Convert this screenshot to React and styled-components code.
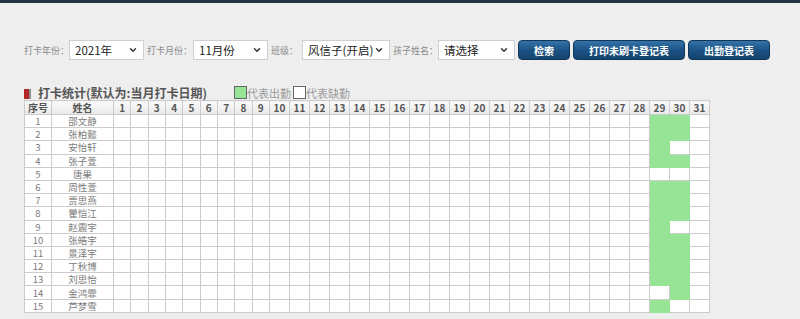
import styled, { createGlobalStyle } from "styled-components";
import { ChevronDown } from "lucide-react";

const GlobalStyle = createGlobalStyle`
  html, body {
    margin: 0;
    padding: 0;
    background: #eeeeee;
    font-family: "Noto Sans CJK SC", "Noto Sans", sans-serif;
  }
`;

const TopBar = styled.div`
  height: 3px;
  background: #25323f;
`;

const Page = styled.div`
  padding: 37px 0 0 24px;
`;

const FilterRow = styled.div`
  display: flex;
  align-items: center;
  height: 20px;
`;

const Label = styled.span`
  font-size: 9px;
  color: #8a8a8a;
  white-space: nowrap;
  width: ${(p) => p.w}px;
  margin-right: 3px;
`;

const SelectBox = styled.div`
  box-sizing: border-box;
  width: ${(p) => p.w}px;
  height: 20px;
  background: #fff;
  border: 1px solid #cfcfcf;
  display: flex;
  align-items: center;
  justify-content: space-between;
  padding: 0 5px 0 5px;
  margin-right: 3px;
  font-size: 11.5px;
  color: #222;
  white-space: nowrap;
  overflow: hidden;
`;

const Button = styled.button`
  box-sizing: border-box;
  width: ${(p) => p.w}px;
  height: 20px;
  margin-right: 3px;
  border: 1px solid #0f3558;
  border-radius: 4px;
  background: linear-gradient(#3472a8, #1a5182 55%, #15446f);
  color: #fff;
  font-family: inherit;
  font-weight: bold;
  font-size: 10px;
  padding: 0;
`;

const TitleRow = styled.div`
  display: flex;
  align-items: flex-end;
  margin-top: 25px;
  height: 15px;
`;

const TitleMark = styled.span`
  display: inline-block;
  width: 5px;
  height: 10px;
  background: #b3262a;
  border-right: 2px solid #8c8c8c;
  margin: 0 7px 1px 0;
`;

const Title = styled.span`
  font-size: 12px;
  font-weight: bold;
  color: #555;
  line-height: 15px;
  margin-right: 27px;
`;

const LegendBox = styled.span`
  display: inline-block;
  box-sizing: border-box;
  width: 13px;
  height: 13px;
  border: 1px solid #666;
  background: ${(p) => (p.on ? "#97e497" : "#fff")};
  margin-bottom: 1px;
`;

const LegendText = styled.span`
  font-size: 11px;
  color: #9a9a9a;
  line-height: 14px;
  margin-right: 2px;
`;

const Table = styled.table`
  border-collapse: collapse;
  table-layout: fixed;
  width: 685px;
  background: #fff;
`;

const HeadCell = styled.th`
  height: 13px;
  padding: 0;
  border: 1px solid #cccccc;
  background: linear-gradient(#fafafa, #e9e9e9);
  font-size: 10px;
  font-weight: bold;
  color: #555;
  line-height: 13px;
  text-align: center;
`;

const Cell = styled.td`
  height: 12.2px;
  padding: 0;
  border: 1px solid ${(p) => (p.on ? "#97e497" : "#cccccc")};
  background: ${(p) => (p.on ? "#97e497" : "#fff")};
  font-size: 9.5px;
  color: #7a7a7a;
  line-height: 12px;
  text-align: center;
`;

const names = [
  "邵文静", "张柏懿", "安怡轩", "张子萱", "唐果", "周性萱", "贾思燕", "瞿恺江",
  "赵震宇", "张皓宇", "景泽宇", "丁秋博", "刘思怡", "金鸿霏", "芦梦雪",
];

// attendance on day 29 / 30
const att = [
  [1, 1], [1, 1], [1, 0], [1, 1], [0, 0], [1, 1], [1, 1], [1, 1],
  [1, 0], [1, 1], [1, 1], [1, 1], [1, 1], [0, 1], [1, 0],
];

const days = Array.from({ length: 31 }, (_, i) => i + 1);

function Select({ w, value }) {
  return (
    <SelectBox w={w}>
      <span>{value}</span>
      <ChevronDown size={10} strokeWidth={3.5} color="#333" />
    </SelectBox>
  );
}

export default function App() {
  return (
    <>
      <GlobalStyle />
      <TopBar />
      <Page>
        <FilterRow>
          <Label w={42}>打卡年份：</Label>
          <Select w={75} value="2021年" />
          <Label w={43}>打卡月份：</Label>
          <Select w={75} value="11月份" />
          <Label w={28}>班级：</Label>
          <Select w={88} value="风信子(开启)" />
          <Label w={42}>孩子姓名：</Label>
          <Select w={77} value="请选择" />
          <Button w={52}>检索</Button>
          <Button w={112}>打印未刷卡登记表</Button>
          <Button w={82}>出勤登记表</Button>
        </FilterRow>

        <TitleRow>
          <TitleMark />
          <Title>打卡统计(默认为:当月打卡日期)</Title>
          <LegendBox on />
          <LegendText>代表出勤</LegendText>
          <LegendBox />
          <LegendText>代表缺勤</LegendText>
        </TitleRow>

        <Table>
          <colgroup>
            <col style={{ width: 27 }} />
            <col style={{ width: 62 }} />
            {days.map((d) => (
              <col key={d} style={{ width: d < 10 ? 17.33 : 20 }} />
            ))}
          </colgroup>
          <thead>
            <tr>
              <HeadCell>序号</HeadCell>
              <HeadCell>姓名</HeadCell>
              {days.map((d) => (
                <HeadCell key={d}>{d}</HeadCell>
              ))}
            </tr>
          </thead>
          <tbody>
            {names.map((n, i) => (
              <tr key={n}>
                <Cell>{i + 1}</Cell>
                <Cell>{n}</Cell>
                {days.map((d) => (
                  <Cell
                    key={d}
                    on={(d === 29 && att[i][0]) || (d === 30 && att[i][1])}
                  />
                ))}
              </tr>
            ))}
          </tbody>
        </Table>
      </Page>
    </>
  );
}
